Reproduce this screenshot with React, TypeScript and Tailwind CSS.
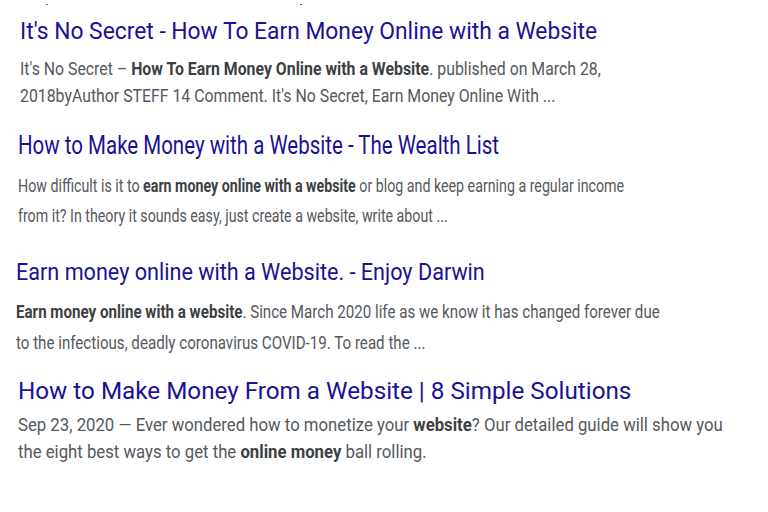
import type { ReactNode } from "react"

type Result = {
  title: string
  lines: ReactNode[]
  box: string
  titleCls: string
  textCls: string
  lineCls: string
}

// the screenshot is squeezed sideways by a different amount per result
const results: Result[] = [
  {
    title: "It's No Secret - How To Earn Money Online with a Website",
    box: "pl-[20px] pt-[16px]",
    titleCls: "text-[24px] leading-[30px] scale-x-[0.95]",
    textCls: "mt-[9px] text-[18px] leading-[27px]",
    lineCls: "scale-x-[0.88]",
    lines: [
      <>It's No Secret – <b>How To Earn Money Online with a Website</b>. published on March 28,</>,
      <>2018byAuthor STEFF 14 Comment. It's No Secret, Earn Money Online With ...</>,
    ],
  },
  {
    title: "How to Make Money with a Website - The Wealth List",
    box: "pl-[18px] pt-[21px]",
    titleCls: "text-[25px] leading-[32px] scale-x-[0.82]",
    textCls: "mt-[9px] text-[18px] leading-[30px]",
    lineCls: "scale-x-[0.79]",
    lines: [
      <>How difficult is it to <b>earn money online with a website</b> or blog and keep earning a regular income</>,
      <>from it? In theory it sounds easy, just create a website, write about ...</>,
    ],
  },
  {
    title: "Earn money online with a Website. - Enjoy Darwin",
    box: "pl-[16px] pt-[26px]",
    titleCls: "text-[24px] leading-[30px] scale-x-[0.9]",
    textCls: "mt-[9px] text-[18px] leading-[31px]",
    lineCls: "scale-x-[0.84]",
    lines: [
      <><b>Earn money online with a website</b>. Since March 2020 life as we know it has changed forever due</>,
      <>to the infectious, deadly coronavirus COVID-19. To read the ...</>,
    ],
  },
  {
    title: "How to Make Money From a Website | 8 Simple Solutions",
    box: "pl-[18px] pt-[18px]",
    titleCls: "text-[24px] leading-[30px] scale-x-[1.01]",
    textCls: "mt-[5px] text-[18px] leading-[27px]",
    lineCls: "scale-x-[0.93]",
    lines: [
      <>Sep 23, 2020 — Ever wondered how to monetize your <b>website</b>? Our detailed guide will show you</>,
      <>the eight best ways to get the <b>online money</b> ball rolling.</>,
    ],
  },
]

export default function App() {
  return (
    <div className="w-[768px] h-[512px] bg-white overflow-hidden font-['Roboto','Liberation_Sans',sans-serif]">
      <div className="flex gap-[252px] pl-[46px] h-0">
        <span className="block w-[2px] h-[1px] mt-[4px] bg-gray-500" />
        <span className="block w-[2px] h-[1px] mt-[4px] bg-gray-500" />
      </div>
      {results.map(r => (
        <div key={r.title} className={`flex flex-col items-start ${r.box}`}>
          <a className={`block origin-left text-[#1a1196] whitespace-nowrap ${r.titleCls}`}>{r.title}</a>
          <div className={`text-[#55585c] whitespace-nowrap [&_b]:text-[#3c3f43] [&_b]:font-bold ${r.textCls}`}>
            {r.lines.map((l, i) => (
              <div key={i} className={`origin-left ${r.lineCls}`}>{l}</div>
            ))}
          </div>
        </div>
      ))}
    </div>
  )
}
